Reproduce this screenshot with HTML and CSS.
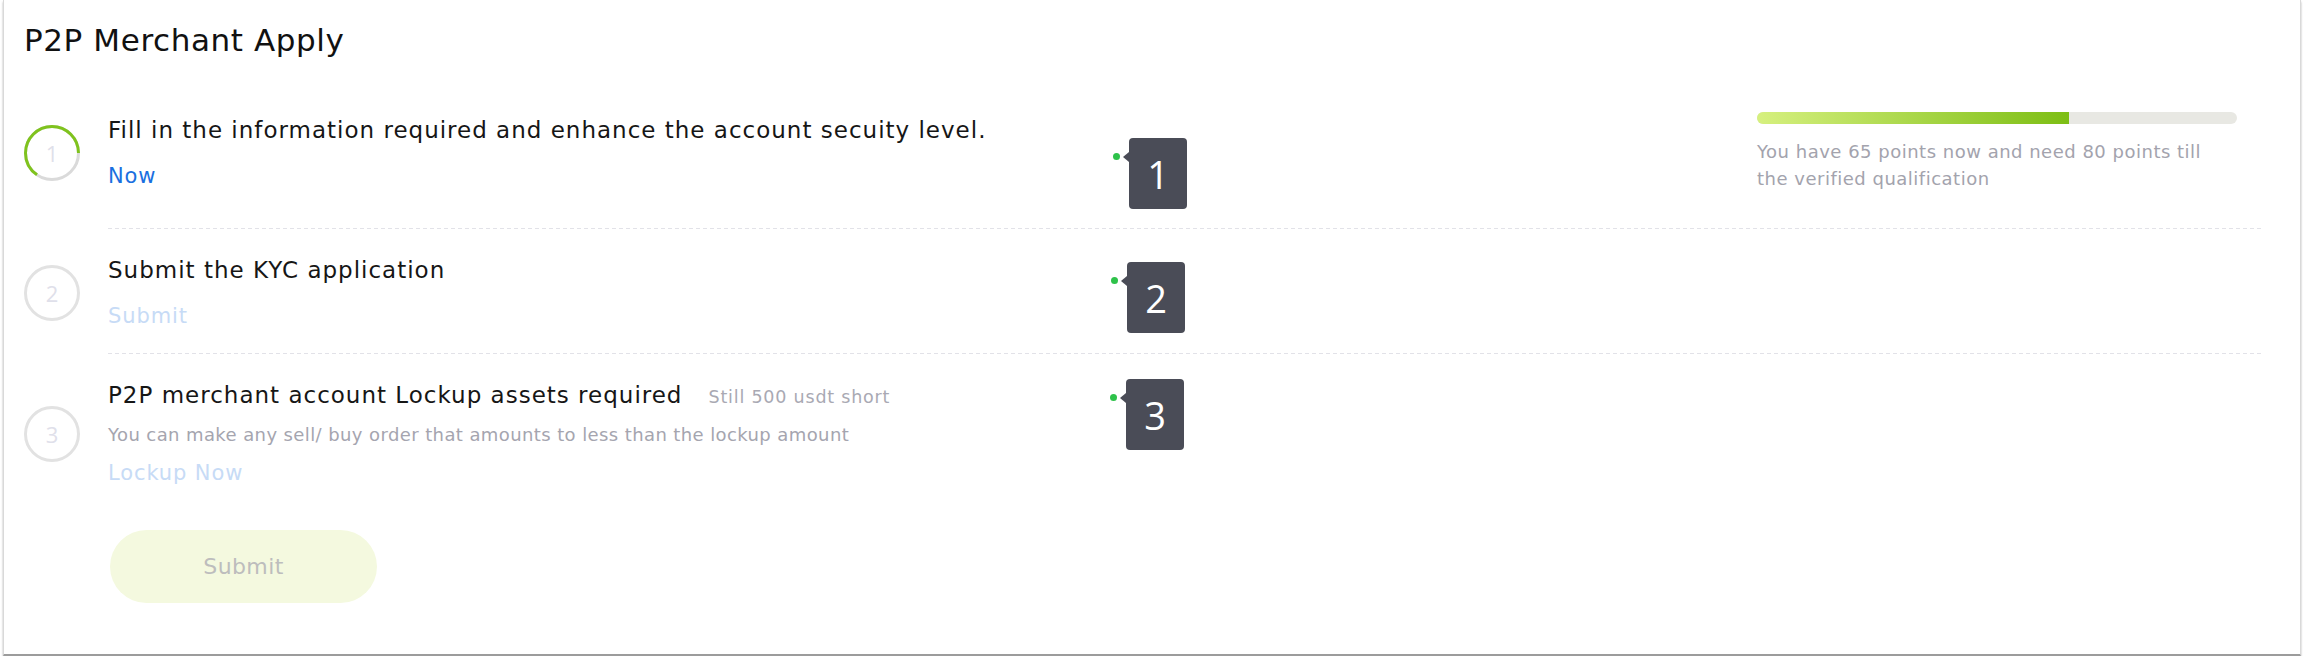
FILE: index.html
```html
<!DOCTYPE html>
<html lang="en">
<head>
<meta charset="utf-8">
<title>P2P Merchant Apply</title>
<link rel="stylesheet" href="styles.css">
</head>
<body>
<div class="page">
  <div class="card">
    <h1 class="title">P2P Merchant Apply</h1>
    <div class="steps">
      <div class="step step-first">
        <div class="step-left">
          <div class="ring">
            <svg width="56" height="56" viewBox="0 0 56 56">
              <circle class="ring-track" cx="28" cy="28" r="26.5"/>
              <circle class="ring-arc" cx="28" cy="28" r="26.5" stroke-dasharray="108.2 200" transform="translate(0 56) scale(1 -1)"/>
            </svg>
            <span class="ring-num">1</span>
          </div>
          <div class="step-text">
            <div class="step-title">Fill in the information required and enhance the account secuity level.</div>
            <a class="link">Now</a>
          </div>
        </div>
        <div class="progress">
          <div class="bar"><div class="fill" style="width:65%"></div></div>
          <p class="progress-text">You have 65 points now and need 80 points till the verified qualification</p>
        </div>
      </div>
      <div class="divider"></div>
      <div class="step">
        <div class="step-left">
          <div class="ring">
            <svg width="56" height="56" viewBox="0 0 56 56">
              <circle class="ring-track ring-idle" cx="28" cy="28" r="26.5"/>
            </svg>
            <span class="ring-num">2</span>
          </div>
          <div class="step-text">
            <div class="step-title">Submit the KYC application</div>
            <a class="link link-off">Submit</a>
          </div>
        </div>
      </div>
      <div class="divider"></div>
      <div class="step">
        <div class="step-left">
          <div class="ring">
            <svg width="56" height="56" viewBox="0 0 56 56">
              <circle class="ring-track ring-idle" cx="28" cy="28" r="26.5"/>
            </svg>
            <span class="ring-num">3</span>
          </div>
          <div class="step-text">
            <div class="step-title">P2P merchant account Lockup assets required<span class="step-note">Still 500 usdt short</span></div>
            <div class="step-desc">You can make any sell/ buy order that amounts to less than the lockup amount</div>
            <a class="link link-off link-after-desc">Lockup Now</a>
          </div>
        </div>
      </div>
    </div>
    <button class="submit" type="button">Submit</button>

    <div class="marker marker-1">1</div>
    <div class="marker marker-2">2</div>
    <div class="marker marker-3">3</div>
  </div>
</div>
</body>
</html>
```
FILE: styles.css
```css
* { box-sizing: border-box; }
body {
  margin: 0;
  background: #fff;
  font-family: "DejaVu Sans", "Open Sans", sans-serif;
}
.page { padding: 0 3px; }
.card {
  position: relative;
  height: 656px;
  background: #fff;
  border-left: 1px solid #d9d9d9;
  border-right: 1px solid #d9d9d9;
  border-bottom: 2px solid #9c9c9c;
  box-shadow: 0 2px 2px rgba(0, 0, 0, 0.3);
  padding: 20px 36px 0 20px;
}
.title {
  margin: 0 0 29px;
  font-size: 31px;
  font-weight: 400;
  line-height: 40px;
  letter-spacing: 0.6px;
  color: #111;
}
.step {
  display: flex;
  justify-content: space-between;
  align-items: flex-start;
  padding: 24px 0 20px;
}
.step-first { padding-bottom: 35px; }
.step-left {
  display: flex;
  align-items: center;
  gap: 28px;
}
.ring {
  position: relative;
  width: 56px;
  height: 56px;
  flex: none;
}
.ring svg { display: block; }
.ring-track {
  fill: none;
  stroke: #dadada;
  stroke-width: 3;
}
.ring-idle { stroke: #e2e2e2; }
.ring-arc {
  fill: none;
  stroke: #7fc31d;
  stroke-width: 3;
}
.ring-num {
  position: absolute;
  inset: 0;
  display: flex;
  align-items: center;
  justify-content: center;
  font-family: "Open Sans", sans-serif;
  font-size: 22px;
  color: #dfe0ea;
}
.step-title {
  font-size: 23px;
  line-height: 34px;
  letter-spacing: 1px;
  color: #161616;
}
.step-note {
  margin-left: 26px;
  font-size: 17.5px;
  letter-spacing: 0.8px;
  color: #a9a9b3;
}
.link {
  display: block;
  margin-top: 12px;
  font-size: 21px;
  line-height: 34px;
  letter-spacing: 0.9px;
  color: #1a6fe0;
}
.link-off { color: #c7dbf6; }
.step-desc {
  margin-top: 8px;
  font-size: 18px;
  line-height: 26px;
  letter-spacing: 0.4px;
  color: #a5a5af;
}
.link-after-desc { margin-top: 8px; }
.progress {
  width: 480px;
  margin-right: 27px;
  margin-top: -1px;
}
.bar {
  height: 12px;
  border-radius: 6px;
  background: #e8e8e3;
  overflow: hidden;
}
.fill {
  height: 100%;
  background: linear-gradient(90deg, #d6f07f, #7dbe14);
}
.progress-text {
  margin: 14px 0 0;
  font-size: 18px;
  line-height: 27px;
  letter-spacing: 0.5px;
  color: #a3a3ad;
  max-width: 455px;
}
.divider {
  height: 1px;
  margin-left: 84px;
  background-image: linear-gradient(90deg, #e2e2e8 4px, transparent 4px);
  background-size: 7px 1px;
}
.submit {
  display: block;
  margin: 20px 0 0 86px;
  width: 267px;
  height: 73px;
  border: 0;
  border-radius: 37px;
  background: #f4f9df;
  color: #bdbdbd;
  font-family: "DejaVu Sans", "Open Sans", sans-serif;
  font-size: 22px;
  letter-spacing: 0.4px;
}
.marker {
  position: absolute;
  width: 58px;
  height: 71px;
  border-radius: 4px;
  background: #4a4c57;
  color: #fff;
  font-family: "Open Sans", sans-serif;
  font-size: 38px;
  display: flex;
  align-items: center;
  justify-content: center;
}
.marker::before {
  content: "";
  position: absolute;
  left: -6px;
  top: 14px;
  border-top: 5px solid transparent;
  border-bottom: 5px solid transparent;
  border-right: 6px solid #4a4c57;
}
.marker::after {
  content: "";
  position: absolute;
  left: -16px;
  top: 15px;
  width: 7px;
  height: 7px;
  border-radius: 50%;
  background: #2ec24a;
}
.marker-1 { left: 1125px; top: 138px; }
.marker-2 { left: 1123px; top: 262px; }
.marker-3 { left: 1122px; top: 379px; }
```
